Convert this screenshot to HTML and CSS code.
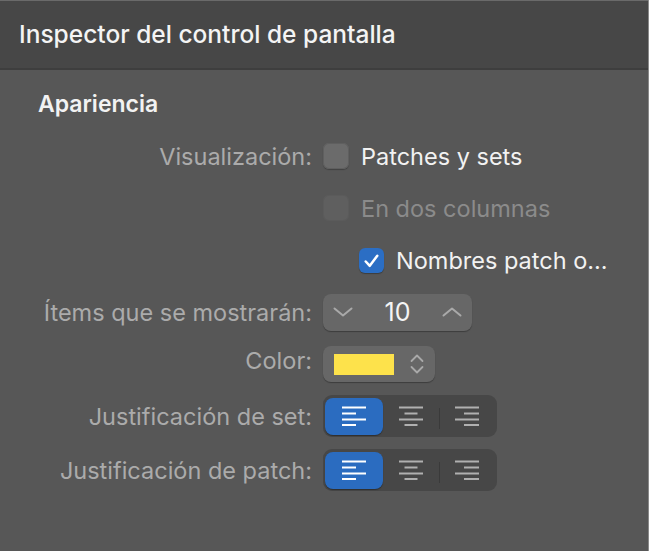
FILE: index.html
```html
<!DOCTYPE html>
<html lang="es">
<head>
<meta charset="utf-8">
<title>Inspector del control de pantalla</title>
<link rel="stylesheet" href="styles.css">
</head>
<body>
<div class="panel">
  <header class="header">
    <h1 class="title">Inspector del control de pantalla</h1>
  </header>
  <section class="body">
    <h2 class="section-title">Apariencia</h2>
    <div class="form">
      <div class="label">Visualización:</div>
      <div class="control">
        <span class="check"></span><span class="check-text">Patches y sets</span>
      </div>

      <div class="label"></div>
      <div class="control">
        <span class="check disabled"></span><span class="check-text dim">En dos columnas</span>
      </div>

      <div class="label"></div>
      <div class="control indent">
        <span class="check checked">
          <svg viewBox="0 0 26 26" width="26" height="26"><path d="M7 13.5 L11.2 18 L19 7.5" fill="none" stroke="#fff" stroke-width="2.6" stroke-linecap="round" stroke-linejoin="round"/></svg>
        </span><span class="check-text">Nombres patch o...</span>
      </div>

      <div class="label">Ítems que se mostrarán:</div>
      <div class="control">
        <div class="stepper">
          <svg class="chev" viewBox="0 0 20 10" width="20" height="10"><path d="M1.5 1.5 L10 8.5 L18.5 1.5" fill="none" stroke="#a9a9a9" stroke-width="2" stroke-linecap="round" stroke-linejoin="round"/></svg>
          <span class="stepper-value">10</span>
          <svg class="chev" viewBox="0 0 20 10" width="20" height="10"><path d="M1.5 8.5 L10 1.5 L18.5 8.5" fill="none" stroke="#a9a9a9" stroke-width="2" stroke-linecap="round" stroke-linejoin="round"/></svg>
        </div>
      </div>

      <div class="label raised">Color:</div>
      <div class="control">
        <div class="popup">
          <span class="swatch"></span>
          <svg class="updown" viewBox="0 0 14 20" width="14" height="20"><path d="M1.5 7 L7 1.5 L12.5 7 M1.5 13 L7 18.5 L12.5 13" fill="none" stroke="#a9a9a9" stroke-width="1.8" stroke-linecap="round" stroke-linejoin="round"/></svg>
        </div>
      </div>

      <div class="label">Justificación de set:</div>
      <div class="control">
        <div class="segmented">
          <span class="seg selected">
            <svg viewBox="0 0 26 20" width="26" height="20"><path d="M1 1.5 H25 M1 7.5 H15 M1 13.5 H25 M1 19 H15" stroke="#fff" stroke-width="1.8"/></svg>
          </span>
          <span class="seg">
            <svg viewBox="0 0 26 20" width="26" height="20"><path d="M1 1.5 H25 M6.5 7.5 H19.5 M1 13.5 H25 M6.5 19 H19.5" stroke="#b0b0b0" stroke-width="1.9"/></svg>
          </span>
          <span class="seg sep">
            <svg viewBox="0 0 26 20" width="26" height="20"><path d="M1 1.5 H25 M10 7.5 H25 M1 13.5 H25 M10 19 H25" stroke="#b0b0b0" stroke-width="1.9"/></svg>
          </span>
        </div>
      </div>

      <div class="label">Justificación de patch:</div>
      <div class="control">
        <div class="segmented">
          <span class="seg selected">
            <svg viewBox="0 0 26 20" width="26" height="20"><path d="M1 1.5 H25 M1 7.5 H15 M1 13.5 H25 M1 19 H15" stroke="#fff" stroke-width="1.8"/></svg>
          </span>
          <span class="seg">
            <svg viewBox="0 0 26 20" width="26" height="20"><path d="M1 1.5 H25 M6.5 7.5 H19.5 M1 13.5 H25 M6.5 19 H19.5" stroke="#b0b0b0" stroke-width="1.9"/></svg>
          </span>
          <span class="seg sep">
            <svg viewBox="0 0 26 20" width="26" height="20"><path d="M1 1.5 H25 M10 7.5 H25 M1 13.5 H25 M10 19 H25" stroke="#b0b0b0" stroke-width="1.9"/></svg>
          </span>
        </div>
      </div>
    </div>
  </section>
</div>
</body>
</html>
```

FILE: styles.css
```css
* { box-sizing: border-box; }
html, body {
  margin: 0;
  padding: 0;
  background: #575757;
}
body {
  width: 649px;
  height: 551px;
  overflow: hidden;
  font-family: Inter, "Noto Sans", "Liberation Sans", sans-serif;
}
.panel {
  width: 649px;
  height: 551px;
  background: #575757;
  border-right: 1px solid #8a8a8a;
}
.header {
  height: 70px;
  background: #474747;
  border-top: 1px solid #6a6a6a;
  border-bottom: 2px solid #3e3e3e;
  display: flex;
  align-items: center;
  padding-left: 19px;
  padding-bottom: 2px;
}
.title {
  margin: 0;
  font-size: 24.5px;
  font-weight: 500;
  color: #f4f4f4;
  white-space: nowrap;
}
.body {
  padding-top: 20px;
}
.section-title {
  margin: 0 0 0 38px;
  font-size: 23px;
  font-weight: 600;
  color: #f2f2f2;
  line-height: 28px;
}
.form {
  margin-top: 12px;
  display: grid;
  grid-template-columns: 312px auto;
  grid-template-rows: 52px 52px 52px 52px 52px 52px 56px;
  column-gap: 11px;
  align-items: center;
}
.label {
  text-align: right;
  font-size: 23.5px;
  color: #ababab;
  white-space: nowrap;
}
.label.raised {
  padding-bottom: 8px;
}
.control {
  display: flex;
  align-items: center;
}
.control.indent {
  padding-left: 36px;
}
.check {
  width: 26px;
  height: 26px;
  border-radius: 6px;
  background: #6b6b6b;
  box-shadow: inset 0 0 0 1px #5f5f5f, 0 1px 1px rgba(0,0,0,0.25);
  flex: none;
  display: flex;
}
.check.disabled {
  background: #5f5f5f;
  box-shadow: inset 0 0 0 1px #5b5b5b;
}
.check.checked {
  width: 25px;
  height: 25px;
  background: #2b6ec4;
  box-shadow: 0 1px 1px rgba(0,0,0,0.3);
}
.check-text {
  margin-left: 12px;
  font-size: 23.5px;
  color: #f2f2f2;
  white-space: nowrap;
}
.check-text.dim {
  color: #8b8b8b;
}
.stepper {
  width: 149px;
  height: 37px;
  border-radius: 8px;
  background: #676767;
  box-shadow: 0 1px 1px rgba(0,0,0,0.3);
  display: flex;
  align-items: center;
  justify-content: space-between;
  padding: 0 10px;
}
.stepper-value {
  font-size: 25px;
  color: #f4f4f4;
}
.popup {
  width: 112px;
  height: 36px;
  border-radius: 8px;
  background: #676767;
  box-shadow: 0 1px 1px rgba(0,0,0,0.3);
  display: flex;
  align-items: center;
  padding-left: 11px;
}
.swatch {
  width: 60px;
  height: 21px;
  background: #fde24b;
}
.updown {
  margin-left: 16px;
}
.segmented {
  width: 174px;
  height: 42px;
  border-radius: 9px;
  background: #474747;
  display: flex;
  align-items: center;
  padding: 0 2px;
}
.seg {
  width: 58px;
  height: 37px;
  display: flex;
  align-items: center;
  justify-content: center;
  position: relative;
}
.seg.selected {
  width: 60px;
  background: #2b6cc0;
  border-radius: 8px;
  box-shadow: 0 1px 1px rgba(0,0,0,0.35);
}
.seg.sep::before {
  content: "";
  position: absolute;
  left: 0;
  top: 10px;
  height: 21px;
  width: 1px;
  background: #3a3a3a;
}
```
